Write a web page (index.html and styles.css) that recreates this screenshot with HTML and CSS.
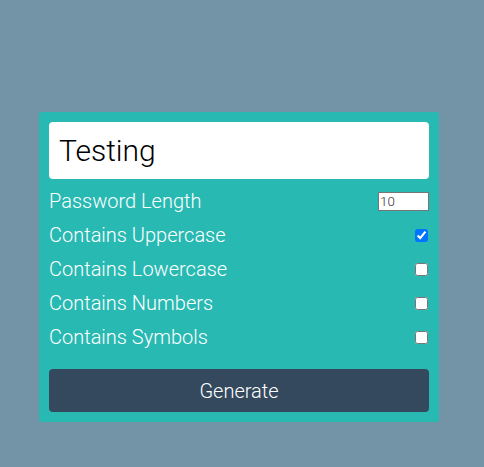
FILE: index.html
```html
<!DOCTYPE html>
<html>
<head>
<meta charset="utf-8">
<link rel="stylesheet" href="styles.css">
</head>
<body>
<div class="page">
  <div class="card">
    <div class="result">Testing</div>
    <div class="settings">
      <label class="row"><span>Password Length</span><input class="num" type="number" value="10"></label>
      <label class="row"><span>Contains Uppercase</span><input type="checkbox" checked></label>
      <label class="row"><span>Contains Lowercase</span><input type="checkbox"></label>
      <label class="row"><span>Contains Numbers</span><input type="checkbox"></label>
      <label class="row"><span>Contains Symbols</span><input type="checkbox"></label>
    </div>
    <button class="generate">Generate</button>
  </div>
</div>
</body>
</html>
```
FILE: styles.css
```css
html, body {
  margin: 0;
  padding: 0;
}
body {
  background: #7393a7;
  font-family: Roboto, "Liberation Sans", sans-serif;
  color: #fff;
}
.page {
  width: 484px;
  height: 467px;
  padding-top: 112px;
  padding-left: 39px;
  box-sizing: border-box;
}
.card {
  width: 400px;
  box-sizing: border-box;
  background: #29b9b3;
  padding: 10px;
  border-radius: 2px;
}
.result {
  background: #fff;
  color: #000;
  border-radius: 4px;
  height: 57px;
  box-sizing: border-box;
  padding-left: 10px;
  font-size: 30px;
  font-weight: 300;
  line-height: 57px;
  margin-bottom: 5px;
}
.settings {
  display: flex;
  flex-direction: column;
}
.row {
  display: flex;
  justify-content: space-between;
  align-items: center;
  height: 34px;
  font-size: 20px;
  font-weight: 300;
}
.row input[type=checkbox] {
  margin: 0 1px 0 0;
  width: 13px;
  height: 13px;
}
.num {
  width: 51px;
  height: 19px;
  box-sizing: border-box;
  margin: 0;
  font-size: 13.333px;
  font-family: Roboto, "Liberation Sans", sans-serif;
  font-weight: 300;
  color: #333;
  padding: 0 1px;
  border: 1px solid #767676;
}
.generate {
  display: block;
  width: 100%;
  height: 43px;
  margin-top: 15px;
  background: #34495e;
  color: #fff;
  border: none;
  border-radius: 4px;
  font-family: Roboto, "Liberation Sans", sans-serif;
  font-size: 20px;
  font-weight: 300;
}
```
